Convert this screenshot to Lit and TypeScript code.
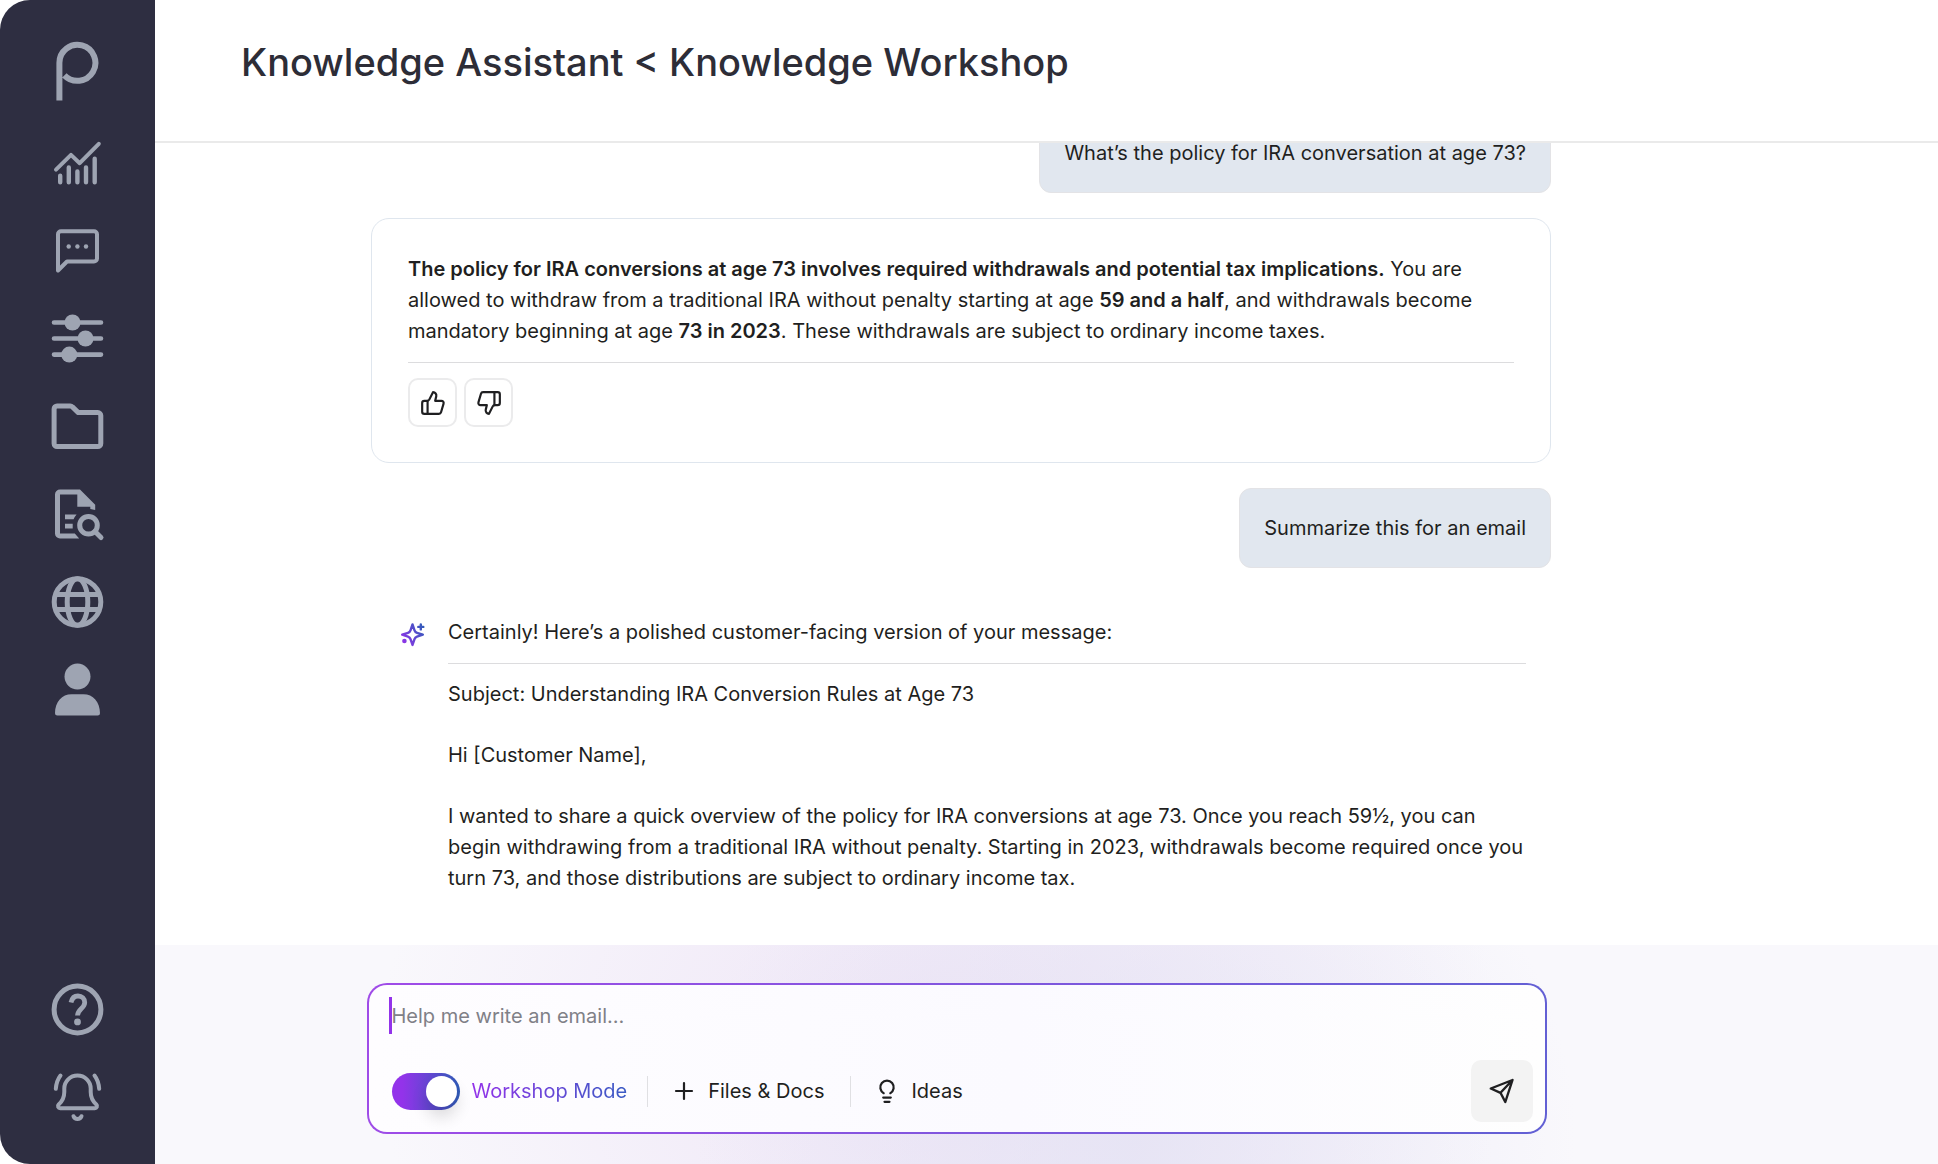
import { LitElement, html, css, svg, type TemplateResult } from "lit";
import { customElement, state } from "lit/decorators.js";

interface NavItem {
  label: string;
  icon: TemplateResult;
}

const navItems: NavItem[] = [
  {
    label: "Analytics",
    icon: svg`
      <g fill="none" stroke="currentColor" stroke-width="4" stroke-linecap="round" stroke-linejoin="round">
        <path d="M6 34.6 21 19.9l8.7 8.3L48.8 8.8" />
        <path stroke-width="4.4" d="M10.2 40.7v6.5M18.8 32.4v14.8M27.4 36.4v10.8M36 32.4v14.8M44.7 23.8v23.4" />
      </g>`,
  },
  {
    label: "Conversations",
    icon: svg`
      <path d="M8 47.5V11.2a3 3 0 0 1 3-3h33a3 3 0 0 1 3 3v24.3a3 3 0 0 1-3 3H17Z" fill="none"
        stroke="currentColor" stroke-width="4" stroke-linejoin="round" />
      <g fill="currentColor"><circle cx="18.7" cy="23.5" r="2.2" /><circle cx="27.4" cy="23.5" r="2.2" /><circle cx="36" cy="23.5" r="2.2" /></g>`,
  },
  {
    label: "Settings",
    icon: svg`
      <path d="M4 11.5h47M4 27.5h47M4 43.6h47" stroke="currentColor" stroke-width="4.6" stroke-linecap="round" />
      <g fill="currentColor"><circle cx="22.5" cy="11.5" r="8" /><circle cx="35.5" cy="27.5" r="8" /><circle cx="19.3" cy="43.6" r="8" /></g>`,
  },
  {
    label: "Files",
    icon: svg`
      <path d="M4.1 10a3 3 0 0 1 3-3h13.2a3 3 0 0 1 2.1.9l5.9 5.7h19.5a3 3 0 0 1 3 3v28a3 3 0 0 1-3 3H7.1a3 3 0 0 1-3-3Z"
        fill="none" stroke="currentColor" stroke-width="5" stroke-linejoin="round" />`,
  },
  {
    label: "Document search",
    icon: svg`
      <path d="M27.3 2.5H10a5 5 0 0 0-5 5v39a5 5 0 0 0 5 5h19.2l-4.4-5H10V7.5h17.3v12.2h13v2.2a16 16 0 0 1 4.9 1.2v-5.4L30 2.5Z" fill="currentColor" />
      <path d="M15 27.5h11.6a16 16 0 0 0-3 4.8H15ZM15 36.8h7.7v4.7H15Z" fill="currentColor" />
      <circle cx="38.5" cy="38.2" r="8.8" fill="none" stroke="currentColor" stroke-width="5" />
      <path d="m45 44.6 6 6" stroke="currentColor" stroke-width="5" stroke-linecap="round" />`,
  },
  {
    label: "Web",
    icon: svg`
      <g fill="none" stroke="currentColor" stroke-width="5">
        <circle cx="27.5" cy="27" r="23.3" />
        <ellipse cx="27.5" cy="27" rx="10.3" ry="23.3" />
        <path d="M5 19.6h45M5 34.4h45" />
      </g>`,
  },
  {
    label: "Profile",
    icon: svg`
      <g fill="currentColor">
        <circle cx="27.5" cy="13.6" r="13" />
        <path d="M5 50.2C5 38.8 12 31.2 21.5 31.2h12C43 31.2 50 38.8 50 50.2a2.3 2.3 0 0 1-2.3 2.3H7.3A2.3 2.3 0 0 1 5 50.2Z" />
      </g>`,
  },
];

const footerItems: NavItem[] = [
  {
    label: "Help",
    icon: svg`
      <g fill="none" stroke="currentColor" stroke-width="5">
        <circle cx="27.5" cy="27.5" r="23.4" />
        <path stroke-width="4.8" d="M21 20.6c.9-4.2 3.4-6.6 7-6.6 3.9 0 6.7 2.7 6.7 6.5 0 5.9-7.2 6.7-7.2 13.1" />
      </g>
      <circle cx="27.5" cy="39.9" r="3.4" fill="currentColor" />`,
  },
  {
    label: "Notifications",
    icon: svg`
      <g fill="none" stroke="currentColor" stroke-width="4" stroke-linecap="round" stroke-linejoin="round">
        <path d="M14.3 18.5a13.2 13 0 0 1 26.4 0v3.5c0 5.5 2.3 9.5 5.6 12.5 1.6 1.6.4 3.7-1.5 3.7H10.2c-1.9 0-3.1-2.1-1.5-3.7 3.3-3 5.6-7 5.6-12.5Z" />
        <path d="M23.5 46.2c1.4 3.7 6.6 3.7 8 0M10.5 5.5C7.8 9 6.2 13.5 5.8 18.8M44.5 5.5c2.7 3.5 4.3 8 4.7 13.3" />
      </g>`,
  },
];

const thumb = svg`
  <g fill="none" stroke="currentColor" stroke-width="2" stroke-linecap="round" stroke-linejoin="round">
    <path d="M7 10v12" />
    <path d="M15 5.88 14 10h5.83a2 2 0 0 1 1.92 2.56l-2.33 8A2 2 0 0 1 17.5 22H4a2 2 0 0 1-2-2v-8a2 2 0 0 1 2-2h2.76a2 2 0 0 0 1.79-1.11L12 2a3.13 3.13 0 0 1 3 3.88Z" />
  </g>`;

@customElement("app-root")
class AppRoot extends LitElement {
  static styles = css`
    :host {
      display: block;
      font-family: Inter, "Liberation Sans", sans-serif;
      font-size: 20px;
      line-height: 31px;
      color: #1f1f21;
      background: #fff;
    }
    * {
      box-sizing: border-box;
    }
    p,
    h1 {
      margin: 0;
    }
    svg {
      display: block;
      flex: none;
    }
    button {
      font: inherit;
      color: inherit;
      background: none;
      border: 0;
      padding: 0;
      cursor: pointer;
    }
    .shell {
      display: grid;
      grid-template-columns: 155px minmax(0, 1fr);
      grid-template-rows: minmax(0, 1fr);
      height: 100vh;
    }
    .sidebar {
      display: flex;
      flex-direction: column;
      align-items: center;
      gap: 33px;
      padding: 40px 0 39px;
      background: #2e2e41;
      border-radius: 30px 0 0 30px;
      color: #9ea4b2;
    }
    .nav {
      display: flex;
      flex-direction: column;
      gap: 33px;
    }
    .nav.end {
      margin-top: auto;
    }
    .main {
      display: grid;
      grid-template-rows: auto minmax(0, 1fr) auto;
      min-width: 0;
      min-height: 0;
    }
    .header {
      padding: 37px 86px 53px;
      border-bottom: 2px solid #eaeaea;
    }
    .title {
      font-size: 38px;
      line-height: 51px;
      font-weight: 500;
      color: #2d2d37;
    }
    .thread {
      display: flex;
      justify-content: center;
      align-items: flex-end;
      min-height: 0;
      overflow: hidden;
      padding: 0 171px 51px 0;
    }
    .column {
      display: flex;
      flex-direction: column;
      gap: 25px;
      width: 100%;
      max-width: 1180px;
    }
    .bubble {
      align-self: flex-end;
      padding: 24px;
      border: 1px solid #e3e3e6;
      border-radius: 12px;
      background: #e1e7ef;
      line-height: 30px;
    }
    .card {
      padding: 35px 36px;
      border: 1px solid #dfe6ee;
      border-radius: 18px;
    }
    b {
      font-weight: 600;
    }
    .rule {
      height: 1px;
      margin: 15px 0;
      border: 0;
      background: #dcdcde;
    }
    .votes {
      display: flex;
      gap: 7px;
    }
    .vote {
      display: grid;
      place-items: center;
      width: 49px;
      height: 49px;
      border: 2px solid #ebebec;
      border-radius: 10px;
    }
    .flip {
      transform: rotate(180deg);
    }
    .reply {
      display: grid;
      grid-template-columns: 24px minmax(0, 1fr);
      column-gap: 23px;
      padding: 24px 25px 0 30px;
    }
    .reply .spark {
      margin-top: 5px;
    }
    .mail {
      display: grid;
      gap: 30px;
    }
    .dock {
      display: flex;
      justify-content: center;
      padding: 38px 180px 30px 0;
      background:
        radial-gradient(ellipse 440px 420px at 55% 90%, rgba(226, 225, 243, 0.7), rgba(226, 225, 243, 0) 100%),
        radial-gradient(ellipse 560px 480px at 44% 50%, rgba(234, 222, 244, 0.75), rgba(234, 222, 244, 0) 100%),
        #f9f8fc;
    }
    .composer {
      width: 100%;
      max-width: 1180px;
      padding: 12px 12px 10px 20px;
      border: 2px solid transparent;
      border-radius: 20px;
      background:
        linear-gradient(90deg, #fefdff, #fbfaff 55%, #fefefe) padding-box,
        linear-gradient(100deg, #a04be8, #6260d4) border-box;
    }
    .prompt {
      display: block;
      width: 100%;
      height: 37px;
      padding: 0;
      border: 0;
      border-left: 3px solid #9333ea;
      outline: 0;
      background: none;
      font: inherit;
      color: inherit;
    }
    .prompt::placeholder {
      color: #808087;
      opacity: 1;
    }
    .tools {
      display: flex;
      align-items: center;
      margin-top: 26px;
    }
    .mode {
      display: flex;
      align-items: center;
      gap: 12px;
      margin-left: 3px;
      cursor: pointer;
    }
    .switch {
      appearance: none;
      display: flex;
      justify-content: flex-end;
      width: 68px;
      height: 37px;
      margin: 0;
      padding: 3px;
      border-radius: 19px;
      background: linear-gradient(90deg, #9333ea 15%, #2f5cb8);
      cursor: pointer;
    }
    .switch::before {
      content: "";
      width: 31px;
      height: 31px;
      border-radius: 50%;
      background: #fff;
      box-shadow: 0 10px 16px rgba(0, 0, 0, 0.14);
    }
    .switch:not(:checked) {
      justify-content: flex-start;
    }
    .mode-name {
      background: linear-gradient(90deg, #9333ea, #3b5bc4);
      background-clip: text;
      color: transparent;
    }
    .divider {
      width: 1px;
      height: 31px;
      margin: 0 24px 0 20px;
      background: #e0e0e3;
    }
    .tool {
      display: flex;
      align-items: center;
      gap: 12px;
      padding-right: 6px;
    }
    .send {
      display: grid;
      place-items: center;
      width: 62px;
      height: 62px;
      margin-left: auto;
      border-radius: 10px;
      background: #f3f3f3;
    }
  `;

  @state() private workshop = true;

  private navButton(item: NavItem) {
    return html`<button type="button" aria-label=${item.label}>
      <svg width="55" height="55" viewBox="0 0 55 55">${item.icon}</svg>
    </button>`;
  }

  render() {
    return html`
      <div class="shell">
        <aside class="sidebar">
          <svg width="55" height="62" viewBox="0 0 55 62" role="img" aria-label="Logo">
            <path d="M9.4 60.5V23a18 18 0 1 1 5 12.3" fill="none" stroke="#9ea4b2" stroke-width="6" />
          </svg>
          <nav class="nav" aria-label="Main">${navItems.map((i) => this.navButton(i))}</nav>
          <nav class="nav end" aria-label="Support">${footerItems.map((i) => this.navButton(i))}</nav>
        </aside>
        <main class="main">
          <header class="header"><h1 class="title">Knowledge Assistant &lt; Knowledge Workshop</h1></header>
          <section class="thread">
            <div class="column">
              <p class="bubble">What’s the policy for IRA conversation at age 73?</p>
              <article class="card">
                <p>
                  <b>The policy for IRA conversions at age 73 involves required withdrawals and potential tax implications.</b>
                  You are allowed to withdraw from a traditional IRA without penalty starting at age
                  <b>59 and a half</b>, and withdrawals become mandatory beginning at age <b>73 in 2023</b>. These
                  withdrawals are subject to ordinary income taxes.
                </p>
                <hr class="rule" />
                <div class="votes">
                  <button class="vote" type="button" aria-label="Good answer">
                    <svg width="26" height="26" viewBox="0 0 24 24">${thumb}</svg>
                  </button>
                  <button class="vote" type="button" aria-label="Bad answer">
                    <svg class="flip" width="26" height="26" viewBox="0 0 24 24">${thumb}</svg>
                  </button>
                </div>
              </article>
              <p class="bubble">Summarize this for an email</p>
              <article class="reply">
                <svg class="spark" width="24" height="25" viewBox="0 0 24 25" aria-hidden="true">
                  <defs>
                    <linearGradient id="spark" gradientUnits="userSpaceOnUse" x1="0" y1="20" x2="24" y2="5">
                      <stop offset="0" stop-color="#9333ea" />
                      <stop offset="1" stop-color="#2f5cb8" />
                    </linearGradient>
                  </defs>
                  <g fill="none" stroke="url(#spark)" stroke-width="2.4" stroke-linecap="round" stroke-linejoin="round">
                    <path d="M11.5 2.5 13.5 8.3a4 4 0 0 0 2.5 2.5l5.8 1.9-5.8 1.9a4 4 0 0 0-2.5 2.5l-2 5.8-2-5.8a4 4 0 0 0-2.5-2.5L1.2 12.7 7 10.8a4 4 0 0 0 2.5-2.5Z" />
                    <path d="M19.8 2.4v5M17.3 4.9h5" />
                  </g>
                  <circle cx="3.4" cy="19" r="2.3" fill="url(#spark)" />
                </svg>
                <div>
                  <p>Certainly! Here’s a polished customer-facing version of your message:</p>
                  <hr class="rule" />
                  <div class="mail">
                    <p>Subject: Understanding IRA Conversion Rules at Age 73</p>
                    <p>Hi [Customer Name],</p>
                    <p>
                      I wanted to share a quick overview of the policy for IRA conversions at age 73. Once you reach
                      59½, you can begin withdrawing from a traditional IRA without penalty. Starting in 2023,
                      withdrawals become required once you turn 73, and those distributions are subject to ordinary
                      income tax.
                    </p>
                  </div>
                </div>
              </article>
            </div>
          </section>
          <footer class="dock">
            <form class="composer" @submit=${(e: Event) => e.preventDefault()}>
              <input class="prompt" type="text" aria-label="Message" placeholder="Help me write an email…" />
              <div class="tools">
                <label class="mode">
                  <input
                    class="switch"
                    type="checkbox"
                    role="switch"
                    .checked=${this.workshop}
                    @change=${(e: Event) => (this.workshop = (e.target as HTMLInputElement).checked)}
                  />
                  <span class="mode-name">Workshop Mode</span>
                </label>
                <span class="divider"></span>
                <button class="tool" type="button">
                  <svg width="24" height="24" viewBox="0 0 24 24" aria-hidden="true">
                    <path d="M12 4v16M4 12h16" stroke="currentColor" stroke-width="2.2" stroke-linecap="round" />
                  </svg>
                  Files &amp; Docs
                </button>
                <span class="divider"></span>
                <button class="tool" type="button">
                  <svg width="24" height="28" viewBox="0 0 24 28" aria-hidden="true">
                    <path
                      d="M8.7 16.2a6.7 6.7 0 1 1 6.6 0M8.2 20.6h7.6M9.5 24.8h5"
                      fill="none" stroke="currentColor" stroke-width="2.2" stroke-linecap="round"
                    />
                  </svg>
                  Ideas
                </button>
                <button class="send" type="submit" aria-label="Send">
                  <svg width="28" height="28" viewBox="0 0 28 28">
                    <path
                      d="M24.5 3 2.8 11.5l9.7 4.3L17.3 25ZM24.5 3l-12 12.8"
                      fill="none" stroke="currentColor" stroke-width="2.4" stroke-linejoin="round"
                    />
                  </svg>
                </button>
              </div>
            </form>
          </footer>
        </main>
      </div>
    `;
  }
}
